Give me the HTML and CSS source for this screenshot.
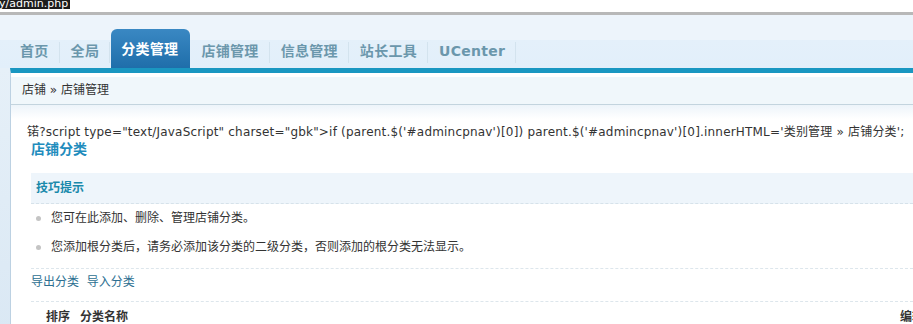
FILE: index.html
```html
<!DOCTYPE html>
<html lang="zh-CN">
<head>
  <meta charset="UTF-8">
  <title>店铺管理</title>
  <link rel="stylesheet" href="styles.css">
</head>
<body>
  <div class="status"><span>y/admin.php</span></div>

  <div class="header">
    <ul class="tabs">
      <li>首页</li>
      <li>全局</li>
      <li class="current">分类管理</li>
      <li>店铺管理</li>
      <li>信息管理</li>
      <li>站长工具</li>
      <li>UCenter</li>
    </ul>
  </div>

  <div class="frame">
    <div class="side"></div>
    <div class="main">
      <div class="crumb">店铺 &raquo; 店铺管理</div>

      <div class="content">
        <div class="raw">锘?script type="text/JavaScript" charset="gbk"&gt;if (parent.$('#admincpnav')[0]) parent.$('#admincpnav')[0].innerHTML='类别管理 &raquo; 店铺分类';</div>
        <h3>店铺分类</h3>

        <div class="tips">
          <div class="tips-title">技巧提示</div>
          <ul>
            <li>您可在此添加、删除、管理店铺分类。</li>
            <li>您添加根分类后，请务必添加该分类的二级分类，否则添加的根分类无法显示。</li>
          </ul>
        </div>

        <div class="actions">
          <a href="#">导出分类</a>
          <a href="#">导入分类</a>
        </div>

        <div class="thead">
          <span class="col-order">排序</span>
          <span>分类名称</span>
          <span class="col-edit">编辑</span>
        </div>
      </div>
    </div>
  </div>
</body>
</html>
```

FILE: styles.css
```css
html, body {
  overflow: hidden;
}

body {
  margin: 0;
  font-family: "DejaVu Sans", "Noto Sans CJK SC", sans-serif;
  font-size: 12px;
  color: #333;
  background: #fff;
}

.status {
  height: 12px;
  background: #fff;
}

.status span {
  display: inline-block;
  height: 9px;
  line-height: 8px;
  font-size: 11px;
  padding: 0 2px 0 0;
  text-indent: -1px;
  overflow: hidden;
  color: #fff;
  background: #1c1c1c;
  vertical-align: top;
}

.header {
  border-top: 3px solid #b8b8b8;
  padding-top: 25px;
  background: #edf4fb;
}

.tabs {
  list-style: none;
  margin: 0;
  padding: 0 0 0 10px;
  height: 28px;
  display: flex;
  align-items: flex-start;
  background: linear-gradient(#e4f0fa, #e2effa);
}

.tabs li {
  margin-top: 2px;
  padding: 0 10px 2px;
  line-height: 19px;
  font-size: 14px;
  font-weight: bold;
  letter-spacing: 0.3px;
  color: #6b97ac;
  border-right: 1px solid #d3e3ee;
  margin-right: 1px;
}

.tabs li.current {
  margin-top: -11px;
  height: 29px;
  padding: 10px 12px 0 10px;
  line-height: 20px;
  color: #fff;
  border-right: none;
  border-radius: 6px 6px 0 0;
  background: linear-gradient(#3a88c3, #1f6eaa);
}

.frame {
  display: flex;
  min-height: 260px;
}

.side {
  width: 10px;
  background: linear-gradient(#e6f0f8, #dae8f4);
}

.main {
  flex: 1;
  border-top: 5px solid #1a97c1;
  border-left: 1px solid #bcd1e2;
}

.crumb {
  height: 27px;
  line-height: 27px;
  border-top: 4px solid #fff;
  border-bottom: 1px solid #c3d4de;
  padding-left: 11px;
  background: #f0f7fb;
}

.content {
  padding: 19px 0 0 20px;
  background: linear-gradient(#edf4fa, #fff 14px);
}

.raw {
  margin-left: -4px;
  line-height: 16px;
  letter-spacing: 0.19px;
  white-space: nowrap;
}

h3 {
  margin: 0;
  font-size: 14px;
  line-height: 18px;
  color: #1f8cbd;
}

.tips {
  margin-top: 15px;
}

.tips-title {
  height: 30px;
  line-height: 30px;
  padding-left: 5px;
  font-weight: bold;
  color: #1a8aac;
  background: #eef5fb;
  border-bottom: 1px dashed #d6e2ea;
}

.tips ul {
  list-style: none;
  margin: 0;
  padding: 0 0 6px;
  border-bottom: 1px dashed #dde6ec;
}

.tips li {
  position: relative;
  line-height: 29px;
  padding-left: 20px;
}

.tips li::before {
  content: "";
  position: absolute;
  left: 5px;
  top: 12px;
  width: 5px;
  height: 5px;
  border-radius: 50%;
  background: #c4c4c4;
}

.actions {
  line-height: 26px;
  padding-bottom: 6px;
  border-bottom: 1px dashed #dde6ec;
}

.actions a {
  color: #2d6f91;
  text-decoration: none;
  margin-right: 4px;
}

.thead {
  display: flex;
  margin-right: -11px;
  line-height: 30px;
  padding-left: 15px;
  font-weight: bold;
}

.col-order {
  margin-right: 10px;
}

.col-edit {
  margin-left: auto;
}
```
